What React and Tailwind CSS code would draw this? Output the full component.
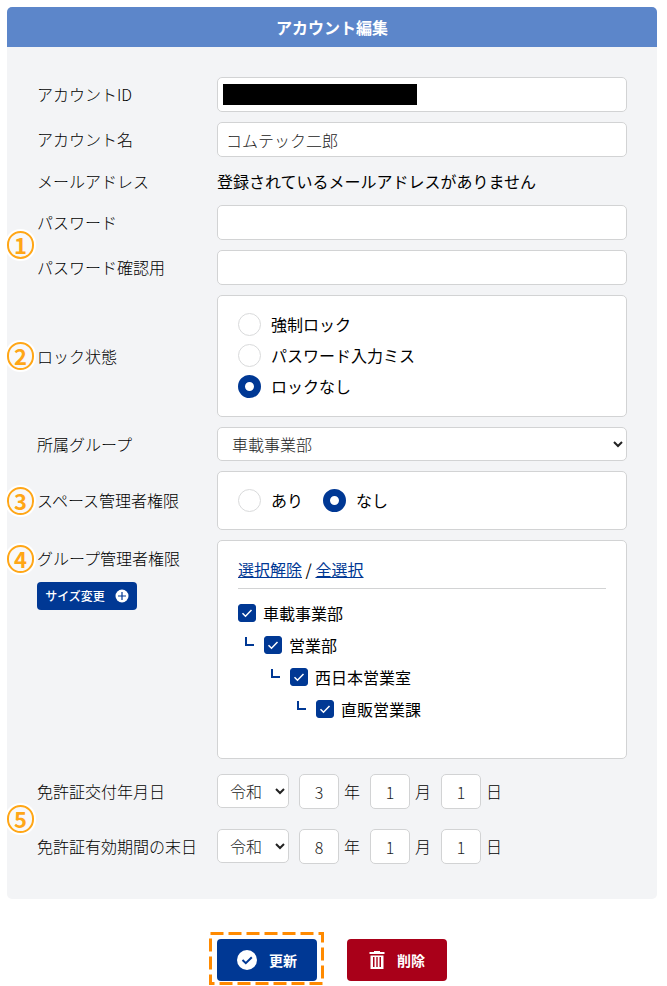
import React from "react";

const field =
  "block h-[35px] w-full rounded-[5px] border border-[#d2d3d4] bg-white px-2 text-base font-light text-[#222] outline-none";
const box = "flex-1 rounded-[5px] border border-[#d2d3d4] bg-white px-5";
const labelCol = "w-[180px] shrink-0 font-light";

function Badge({ n }) {
  return (
    <span className="absolute inset-y-0 -left-[30px] my-auto flex h-7 w-[27px] items-center justify-center rounded-full border-2 border-[#ffa616] bg-[#f8f8f9] pb-0.5 text-[22px] leading-none font-bold text-[#ffa616] ring-2 ring-white">
      {n}
    </span>
  );
}

function InputRow({ id, label, type = "text", value = "", redacted }) {
  return (
    <div className="flex items-center">
      <label htmlFor={id} className={labelCol}>
        {label}
      </label>
      <div className="relative flex-1">
        <input id={id} type={type} defaultValue={value} className={field} />
        {redacted && <span className="absolute top-[7px] left-1.5 h-[21px] w-[194px] bg-black" />}
      </div>
    </div>
  );
}

function Radio({ name, label, checked }) {
  return (
    <label className="flex h-[31px] items-center gap-2.5">
      <input
        type="radio"
        name={name}
        defaultChecked={checked}
        className="size-[23px] appearance-none rounded-full border border-[#d9dadb] bg-white checked:border-[7px] checked:border-[#003894]"
      />
      {label}
    </label>
  );
}

function TreeItem({ label, indent, root }) {
  return (
    <label className={`flex h-8 items-center ${indent}`}>
      {!root && <span className="mr-2.5 mb-2 size-[9px] border-b-2 border-l-2 border-[#003894]" />}
      <span className="relative mr-[7px] flex size-[18px]">
        <input
          type="checkbox"
          defaultChecked
          className="size-[18px] appearance-none rounded-[3px] border border-[#003894] checked:bg-[#003894]"
        />
        <svg viewBox="0 0 18 18" className="pointer-events-none absolute inset-0" fill="none" stroke="#fff" strokeWidth="1.5">
          <path d="M4.5 9.2 7.5 12.2 13.5 6" />
        </svg>
      </span>
      {label}
    </label>
  );
}

function Part({ value, unit, label }) {
  return (
    <label className="flex items-center gap-[5px] font-light">
      <input
        type="text"
        aria-label={label}
        defaultValue={value}
        className="h-[35px] w-10 rounded-[5px] border border-[#d2d3d4] bg-white text-center text-base font-light text-[#222]"
      />
      {unit}
    </label>
  );
}

function DateRow({ id, label, year }) {
  return (
    <div className="flex items-center py-[5px]">
      <label htmlFor={id} className={labelCol}>
        {label}
      </label>
      <div className="flex items-start gap-2.5">
        <select
          id={id}
          className="h-[34px] w-[72px] rounded-[5px] border border-[#d2d3d4] bg-white pl-2 text-base font-light text-[#222]"
        >
          <option>令和</option>
        </select>
        <Part value={year} unit="年" label={`${label} 年`} />
        <Part value="1" unit="月" label={`${label} 月`} />
        <Part value="1" unit="日" label={`${label} 日`} />
      </div>
    </div>
  );
}

export default function App() {
  return (
    <main className="bg-white pt-[7px] pr-2.5 pl-[7px] font-['Noto_Sans_CJK_JP',sans-serif] text-base leading-[23px] text-black">
      <form onSubmit={(e) => e.preventDefault()}>
        <section className="overflow-hidden rounded-[5px] bg-[#f3f4f6]">
          <h1 className="flex h-10 items-center justify-center bg-[#5c86ca] font-bold text-white">アカウント編集</h1>
          <div className="flex flex-col gap-2.5 p-[30px]">
            <InputRow id="account-id" label="アカウントID" redacted />
            <InputRow id="account-name" label="アカウント名" value="コムテック二郎" />
            <div className="flex h-7 items-center">
              <span className={labelCol}>メールアドレス</span>
              <span>登録されているメールアドレスがありません</span>
            </div>
            <div className="relative flex flex-col gap-2.5">
              <Badge n="1" />
              <InputRow id="password" label="パスワード" type="password" />
              <InputRow id="password-confirm" label="パスワード確認用" type="password" />
            </div>
            <div role="radiogroup" aria-labelledby="lock" className="relative flex items-center">
              <Badge n="2" />
              <span id="lock" className={labelCol}>
                ロック状態
              </span>
              <div className={`${box} pt-[13px] pb-3.5`}>
                <Radio name="lock" label="強制ロック" />
                <Radio name="lock" label="パスワード入力ミス" />
                <Radio name="lock" label="ロックなし" checked />
              </div>
            </div>
            <div className="flex items-center">
              <label htmlFor="group" className={labelCol}>
                所属グループ
              </label>
              <select
                id="group"
                className="h-[34px] min-w-0 flex-1 rounded-[5px] border border-[#d2d3d4] bg-white pl-2.5 text-base font-light text-[#222]"
              >
                <option>車載事業部</option>
              </select>
            </div>
            <div role="radiogroup" aria-labelledby="space" className="relative flex items-center">
              <Badge n="3" />
              <span id="space" className={labelCol}>
                スペース管理者権限
              </span>
              <div className={`${box} flex gap-5 py-[13px]`}>
                <Radio name="space" label="あり" />
                <Radio name="space" label="なし" checked />
              </div>
            </div>
            <div className="flex items-start">
              <div className="w-[180px] shrink-0 pt-[7px]">
                <div className="relative font-light">
                  <Badge n="4" />
                  グループ管理者権限
                </div>
                <button
                  type="button"
                  className="mt-3 flex h-7 w-[100px] items-center justify-center gap-2.5 rounded-[4px] bg-[#003894] text-xs font-medium text-white"
                >
                  サイズ変更
                  <svg viewBox="0 0 14 14" className="size-3.5">
                    <circle cx="7" cy="7" r="6.5" fill="#fff" />
                    <path d="M7 3v8M3 7h8" stroke="#003894" strokeWidth="1.2" />
                  </svg>
                </button>
              </div>
              <div className={`${box} pt-[17px] pb-[33px]`}>
                <div className="mb-2 border-b border-[#d2d3d4] pb-[7px]">
                  <a href="#clear" className="text-[#003894] underline">
                    選択解除
                  </a>
                  {" / "}
                  <a href="#all" className="text-[#003894] underline">
                    全選択
                  </a>
                </div>
                <TreeItem label="車載事業部" indent="pl-0" root />
                <TreeItem label="営業部" indent="pl-[7px]" />
                <TreeItem label="西日本営業室" indent="pl-[33px]" />
                <TreeItem label="直販営業課" indent="pl-[59px]" />
              </div>
            </div>
            <div className="relative flex flex-col gap-2.5">
              <Badge n="5" />
              <DateRow id="issued" label="免許証交付年月日" year="3" />
              <DateRow id="expires" label="免許証有効期間の末日" year="8" />
            </div>
          </div>
        </section>
        <div className="flex justify-center gap-[30px] pt-10 pb-[5px] text-sm leading-[19px] font-bold text-white">
          <div className="relative">
            <button type="submit" className="flex h-[42px] w-[100px] items-center justify-center gap-3 rounded-[4px] bg-[#003894]">
              <svg viewBox="0 0 20 20" className="size-5">
                <circle cx="10" cy="10" r="10" fill="#fff" />
                <path d="M5.5 10 8.8 13.2 14.8 7.2" fill="none" stroke="#003894" strokeWidth="2" />
              </svg>
              更新
            </button>
            <svg viewBox="0 0 115 53" className="pointer-events-none absolute -top-[7px] -left-2 h-[53px] w-[115px]">
              <path
                d="M1.5 1.5H113.5V51.5H1.5Z"
                fill="none"
                stroke="#ff8a00"
                strokeWidth="3"
                strokeDasharray="13 5"
              />
            </svg>
          </div>
          <button type="button" className="flex h-[42px] w-[100px] items-center justify-center gap-3 rounded-[4px] bg-[#a90019]">
            <svg viewBox="0 0 16 18" className="h-[18px] w-4" fill="#fff">
              <path d="M5 0h6v1h4.500v2H.5V1H5z" />
              <path fillRule="evenodd" d="M1.500 4.500h13V18h-13zM4 6v10h1.500V6zM7.300 6v10h1.400V6zM10.500 6v10H12V6z" />
            </svg>
            削除
          </button>
        </div>
      </form>
    </main>
  );
}
